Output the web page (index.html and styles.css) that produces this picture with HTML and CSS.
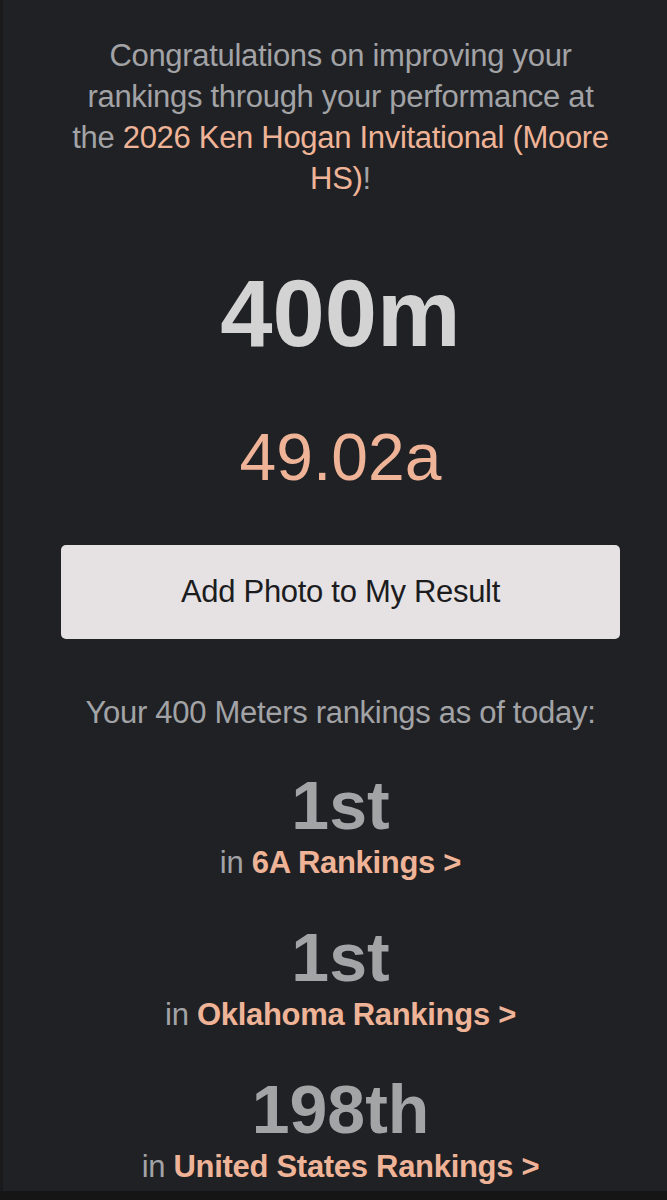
FILE: index.html
```html
<!DOCTYPE html>
<html lang="en">
<head>
    <meta charset="UTF-8">
    <meta name="viewport" content="width=device-width, initial-scale=1.0">
    <title>Rankings Update</title>
    <link rel="stylesheet" href="styles.css">
</head>
<body>
    <div class="page">
        <p class="intro">
            Congratulations on improving your rankings through your performance at the
            <a href="#" class="meet">2026 Ken Hogan Invitational (Moore HS)</a>!
        </p>

        <h1 class="event">400m</h1>
        <div class="mark">49.02a</div>

        <button class="photo-btn">Add Photo to My Result</button>

        <p class="as-of">Your 400 Meters rankings as of today:</p>

        <div class="ranks">
            <div class="rank">
                <div class="place">1st</div>
                <div class="scope">in <a href="#">6A Rankings &gt;</a></div>
            </div>
            <div class="rank">
                <div class="place">1st</div>
                <div class="scope">in <a href="#">Oklahoma Rankings &gt;</a></div>
            </div>
            <div class="rank">
                <div class="place">198th</div>
                <div class="scope">in <a href="#">United States Rankings &gt;</a></div>
            </div>
        </div>
    </div>
</body>
</html>
```

FILE: styles.css
```css
body {
    margin: 0;
    background-color: #151515;
    font-family: 'Liberation Sans', Arial, Helvetica, sans-serif;
}
.page {
    height: 1191px;
    overflow: hidden;
    background-color: #202124;
    border-left: 3px solid #1a1a1c;
    box-sizing: border-box;
    display: flex;
    flex-direction: column;
    align-items: center;
    padding: 35px 44px 0 55px;
    text-align: center;
}
a {
    color: #efb497;
    text-decoration: none;
}
.intro {
    margin: 0;
    font-size: 31px;
    line-height: 41px;
    letter-spacing: -0.3px;
    color: #a2a3a6;
    max-width: 548px;
}
.event {
    margin: 68px 0 0;
    font-size: 94px;
    line-height: 1;
    font-weight: bold;
    color: #d3d3d4;
}
.mark {
    margin-top: 63px;
    font-size: 66px;
    line-height: 1;
    color: #efb497;
}
.photo-btn {
    margin-top: 55px;
    width: 559px;
    height: 94px;
    border: none;
    border-radius: 5px;
    background-color: #e6e2e4;
    color: #1c1c1e;
    font-family: inherit;
    font-size: 31px;
    letter-spacing: -0.3px;
    cursor: pointer;
}
.as-of {
    margin: 53px 0 0;
    font-size: 31px;
    line-height: 41px;
    letter-spacing: -0.3px;
    color: #a2a3a6;
}
.ranks {
    margin-top: 38px;
    display: flex;
    flex-direction: column;
    gap: 40px;
}
.place {
    font-size: 68px;
    line-height: 1;
    font-weight: bold;
    color: #a3a4a6;
}
.scope {
    margin-top: 3px;
    font-size: 31px;
    line-height: 41px;
    letter-spacing: -0.3px;
    color: #a2a3a6;
}
.scope a {
    font-weight: bold;
}
```
